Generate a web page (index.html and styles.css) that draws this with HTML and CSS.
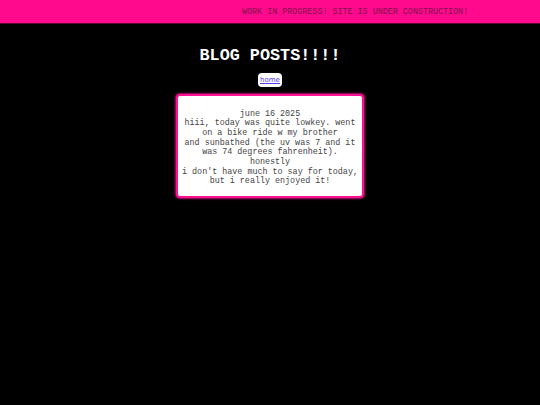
FILE: index.html
```html
<!DOCTYPE html>
<html>
<head>
<meta charset="utf-8">
<link rel="stylesheet" href="styles.css">
</head>
<body>
<div class="topbar"><span class="marquee">WORK IN PROGRESS! SITE IS UNDER CONSTRUCTION!</span></div>
<main class="content">
  <h1 class="title">BLOG POSTS!!!!</h1>
  <div class="nav"><a href="#" class="navlink">home</a></div>
  <div class="card">
    <p class="post">june 16 2025<br>hiii, today was quite lowkey. went on a bike ride w my brother<br>and sunbathed (the uv was 7 and it was 74 degrees fahrenheit). honestly<br>i don't have much to say for today, but i really enjoyed it!</p>
  </div>
</main>
</body>
</html>
```
FILE: styles.css
```css
html, body {
  margin: 0;
  padding: 0;
  background: #000;
  height: 100%;
}
body {
  font-family: "Liberation Mono", "Courier New", monospace;
  color: #fff;
}
.topbar {
  background: #ff0a8c;
  height: 24px;
  border-bottom: 1px solid #5a0a32;
  display: flex;
  align-items: center;
  padding-left: 242px;
  box-sizing: border-box;
}
.marquee {
  font-size: 8.4px;
  color: #80124e;
  white-space: nowrap;
}
.content {
  display: flex;
  flex-direction: column;
  align-items: center;
}
.title {
  margin: 22px 0 0 0;
  font-size: 16.8px;
  font-weight: bold;
  line-height: 20px;
  letter-spacing: 0;
}
.nav {
  margin-top: 7px;
  background: #fff;
  border-radius: 4px;
  padding: 1px 2px;
  height: 14px;
  width: 24px;
  box-sizing: border-box;
  display: flex;
  align-items: center;
  justify-content: center;
}
.navlink {
  font-family: "DejaVu Sans", Verdana, sans-serif;
  font-size: 7px;
  color: #5a3cf0;
  text-decoration: underline;
}
.card {
  margin-top: 7px;
  width: 188px;
  height: 104px;
  box-sizing: border-box;
  background: #fff;
  border: 2.5px solid #ff1090;
  border-radius: 4px;
  box-shadow: 0 0 2px 1px #b0106a;
  display: flex;
  align-items: flex-start;
  justify-content: center;
  padding: 13.5px 3px 0 3px;
}
.post {
  margin: 0;
  font-size: 8.4px;
  line-height: 9.7px;
  color: #444;
  text-align: center;
}
```
